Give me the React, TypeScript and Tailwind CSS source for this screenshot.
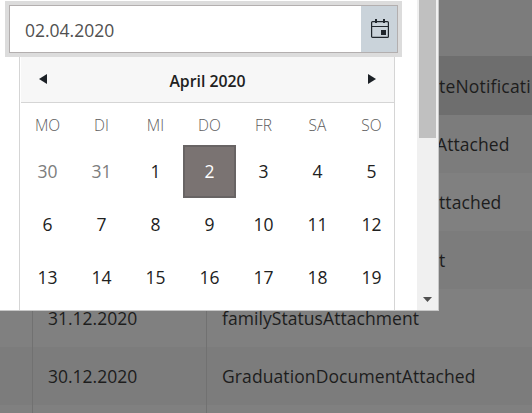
import clsx from "clsx";

const rows = [
  { date: "", name: "", className: "h-[56px] bg-[#7c7c7c]" },
  { date: "", name: "teNotificati", className: "h-[59px] bg-[#6e6e6e] leading-[60px]", nameClass: "pl-[232px] tracking-[0.2px]" },
  { date: "", name: "Attached", className: "h-[58px] bg-[#7c7c7c] leading-[58px]", nameClass: "pl-[229px] tracking-[0.08px]" },
  { date: "", name: "ttached", className: "h-[58px] bg-[#808080] leading-[58px]", nameClass: "pl-[232px] tracking-[0.08px]" },
  { date: "", name: "t", className: "h-[58px] bg-[#7c7c7c] leading-[58px]", nameClass: "pl-[232px]" },
  { date: "31.12.2020", name: "familyStatusAttachment", className: "h-[58px] bg-[#808080] leading-[58px]", nameClass: "pl-[15px] tracking-[0.06px]" },
  { date: "30.12.2020", name: "GraduationDocumentAttached", className: "h-[58px] bg-[#7c7c7c] leading-[58px]", nameClass: "pl-[15px] tracking-[0.1px]" },
  { date: "", name: "", className: "h-[8px] bg-[#808080]" },
];

const weekdays = ["MO", "DI", "MI", "DO", "FR", "SA", "SO"];
const days = [30, 31, 1, 2, 3, 4, 5, 6, 7, 8, 9, 10, 11, 12, 13, 14, 15, 16, 17, 18, 19];

function dayClass(i: number) {
  if (i === 3) return "border-2 border-[#686464] bg-[#7a7372] leading-[49px] text-white";
  if (i < 2) return "leading-[53px] text-[#7d7d7d]";
  return "leading-[53px] text-[#212121]";
}

function CalendarIcon() {
  return (
    <svg width="18" height="20" viewBox="0 0 18 20" className="ml-[2px]" fill="none" stroke="#20262c">
      <rect x="0.6" y="2.6" width="16.8" height="15.8" rx="1" strokeWidth="1.2" />
      <path d="M0.5 7.5h17" strokeWidth="1" />
      <path d="M5 0v4M13 0v4" strokeWidth="2" />
      <rect x="10" y="11" width="5" height="5" fill="#20262c" stroke="none" />
    </svg>
  );
}

function DocumentTable() {
  return (
    <div className="w-full">
      {rows.map((row, i) => (
        <div key={i} className={clsx("flex text-[17.5px] text-[#1d1d1d]", row.className)}>
          <div className="w-[33px] shrink-0 border-r border-[#717171]" />
          <div className="w-[174px] shrink-0 border-r border-[#717171] pl-[15px]">{row.date}</div>
          <div className={clsx("whitespace-nowrap", row.nameClass)}>{row.name}</div>
        </div>
      ))}
    </div>
  );
}

function Calendar() {
  return (
    <div className="ml-[19px] h-[253px] w-[376px] overflow-hidden border-x border-[#d5d5d5] pl-px">
      <div className="flex h-[46px] items-center justify-between border-b border-[#d5d5d5] bg-[#f7f7f7] px-[18px]">
        <svg width="8" height="10" viewBox="0 0 8 10" className="mb-px" fill="#1c2126"><path d="M8 0v10L0 5z" /></svg>
        <span className="pt-[2px] text-[15.8px] leading-6 font-semibold text-[#212121]">April 2020</span>
        <svg width="8" height="10" viewBox="0 0 8 10" className="mb-px" fill="#1c2126"><path d="M0 0v10l8-5z" /></svg>
      </div>
      <div className="grid w-[377px] grid-cols-[repeat(7,53px)] gap-x-px text-center">
        {weekdays.map((day) => (
          <div key={day} className="h-[42px] text-[15.5px] leading-[45px] font-light text-[#5c5c5c]">{day}</div>
        ))}
        {days.map((day, i) => (
          <div key={i} className={clsx("h-[53px] text-[17.5px]", dayClass(i))}>{day}</div>
        ))}
      </div>
    </div>
  );
}

export default function App() {
  return (
    <div className="relative h-[413px] w-[532px] overflow-hidden bg-[#808080] font-['Open_Sans',sans-serif]">
      <DocumentTable />
      <div className="absolute top-0 left-0 flex h-[311px] w-[439px] border-r border-b border-[#c8c8c8] bg-white">
        <div className="w-[417px] shrink-0 pt-px">
          <div className="ml-[5px] h-[56px] w-[397px] bg-[#dcdcdc] p-1">
            <div className="flex h-[48px] border border-[#b3afaf] bg-white">
              <div className="flex-1 pl-[15px] text-[17.5px] leading-[49px] text-[#505050]">02.04.2020</div>
              <div className="flex w-[36px] items-center justify-center bg-[#cad3da]">
                <CalendarIcon />
              </div>
            </div>
          </div>
          <Calendar />
        </div>
        <div className="flex w-[21px] flex-col items-center justify-between bg-[#f0f0f0] pb-[8px]">
          <div className="h-[138px] w-[17px] bg-[#c0c0c0]" />
          <svg width="9" height="5" viewBox="0 0 9 5" fill="#505050"><path d="M0 0h9L4.5 5z" /></svg>
        </div>
      </div>
    </div>
  );
}
